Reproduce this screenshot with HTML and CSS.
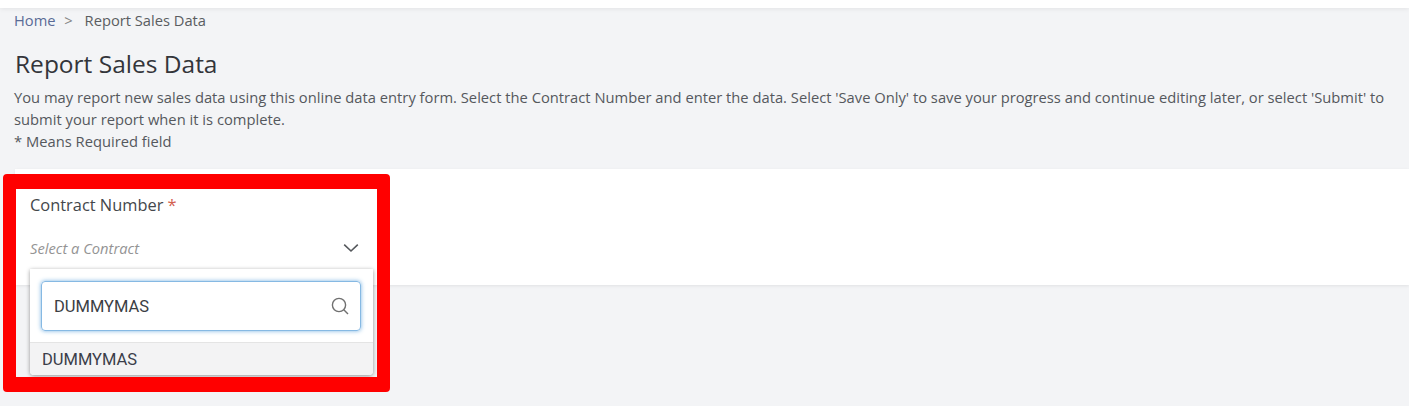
FILE: index.html
```html
<!DOCTYPE html>
<html lang="en">
<head>
  <meta charset="UTF-8">
  <title>Report Sales Data</title>
  <link rel="stylesheet" href="styles.css">
</head>
<body>
  <div class="topbar"></div>

  <main>
    <nav class="breadcrumb">
      <a href="#">Home</a>
      <span class="sep">&gt;</span>
      <span>Report Sales Data</span>
    </nav>

    <h1>Report Sales Data</h1>
    <p class="intro">You may report new sales data using this online data entry form. Select the Contract Number and enter the data. Select 'Save Only' to save your progress and continue editing later, or select 'Submit' to submit your report when it is complete.</p>
    <p class="intro">* Means Required field</p>

    <section class="card">
      <label class="field-label">Contract Number <span class="required">*</span></label>
      <div class="select">
        <span>Select a Contract</span>
        <svg class="chevron" viewBox="0 0 16 10" fill="none" stroke="#55585c" stroke-width="1.6">
          <path d="M1.2 1.6L8 8l6.8-6.4"></path>
        </svg>
      </div>

      <div class="dropdown">
        <div class="search-wrap">
          <div class="search">
            <span>DUMMYMAS</span>
            <svg class="search-icon" viewBox="0 0 18 18" fill="none" stroke="#707070" stroke-width="1.4">
              <circle cx="8" cy="8" r="6.6"></circle>
              <path d="M12.8 12.8L17 17"></path>
            </svg>
          </div>
        </div>
        <div class="option">DUMMYMAS</div>
      </div>
    </section>
  </main>

  <!-- annotation drawn on top of the screenshot -->
  <div class="highlight"></div>
</body>
</html>
```

FILE: styles.css
```css
* {
  margin: 0;
  padding: 0;
  box-sizing: border-box;
}

html, body {
  height: 100%;
  overflow: hidden;
}

body {
  font-family: "Open Sans", sans-serif;
  background-color: #f3f4f6;
  color: #55585d;
  position: relative;
}

.topbar {
  height: 8px;
  background-color: #fff;
  box-shadow: 0 1px 5px rgba(0, 0, 0, 0.07);
}

main {
  padding: 2px 0 0 15px;
}

.breadcrumb {
  font-size: 14.7px;
  line-height: 20px;
  color: #5a5d61;
  margin-left: -1px;
}

.breadcrumb a {
  color: #5a6b96;
  text-decoration: none;
}

.breadcrumb .sep {
  margin: 0 8px 0 5px;
  color: #858585;
}

h1 {
  font-size: 24.5px;
  font-weight: 400;
  line-height: 32px;
  color: #33353a;
  margin-top: 18px;
}

.intro {
  font-size: 14.74px;
  line-height: 22px;
  padding-right: 15px;
  margin-left: -1px;
}

h1 + .intro {
  margin-top: 6px;
}

.card {
  background-color: #fff;
  height: 116px;
  margin-top: 17px;
  padding: 25px 15px 0;
  position: relative;
  box-shadow: 0 1px 3px rgba(0, 0, 0, 0.08);
}

.field-label {
  display: block;
  font-size: 16.4px;
  line-height: 22px;
  color: #44474b;
}

.required {
  color: #d2604f;
}

.select {
  width: 329px;
  margin-top: 22px;
  display: flex;
  justify-content: space-between;
  align-items: center;
  font-size: 14.7px;
  font-style: italic;
  line-height: 20px;
  color: #949494;
}

.chevron {
  width: 16px;
  height: 10px;
}

.dropdown {
  position: absolute;
  left: 15px;
  top: 100px;
  width: 343px;
  background-color: #fff;
  border-radius: 0 0 4px 4px;
  box-shadow: 0 1px 4px rgba(0, 0, 0, 0.4);
  z-index: 2;
}

.search-wrap {
  padding: 12px 12px 11px 11px;
  border-bottom: 1px solid #e4e4e4;
}

.search {
  height: 50px;
  padding: 0 11px 0 12px;
  display: flex;
  justify-content: space-between;
  align-items: center;
  border: 1px solid #86b9e3;
  border-radius: 4px;
  box-shadow: 0 0 4px rgba(90, 160, 220, 0.8);
  font-family: Roboto, sans-serif;
  font-size: 16.5px;
  color: #3b3e44;
}

.search-icon {
  width: 18px;
  height: 18px;
}

.option {
  height: 32px;
  padding-left: 12px;
  background-color: #f3f3f4;
  border-radius: 0 0 4px 4px;
  font-family: Roboto, sans-serif;
  font-size: 16.5px;
  line-height: 33px;
  color: #3b3e4a;
}

.highlight {
  position: absolute;
  left: 3px;
  top: 174px;
  width: 387px;
  height: 218px;
  border-style: solid;
  border-color: #ff0000;
  border-width: 15px 13px;
  border-radius: 4px;
  z-index: 5;
}
```
